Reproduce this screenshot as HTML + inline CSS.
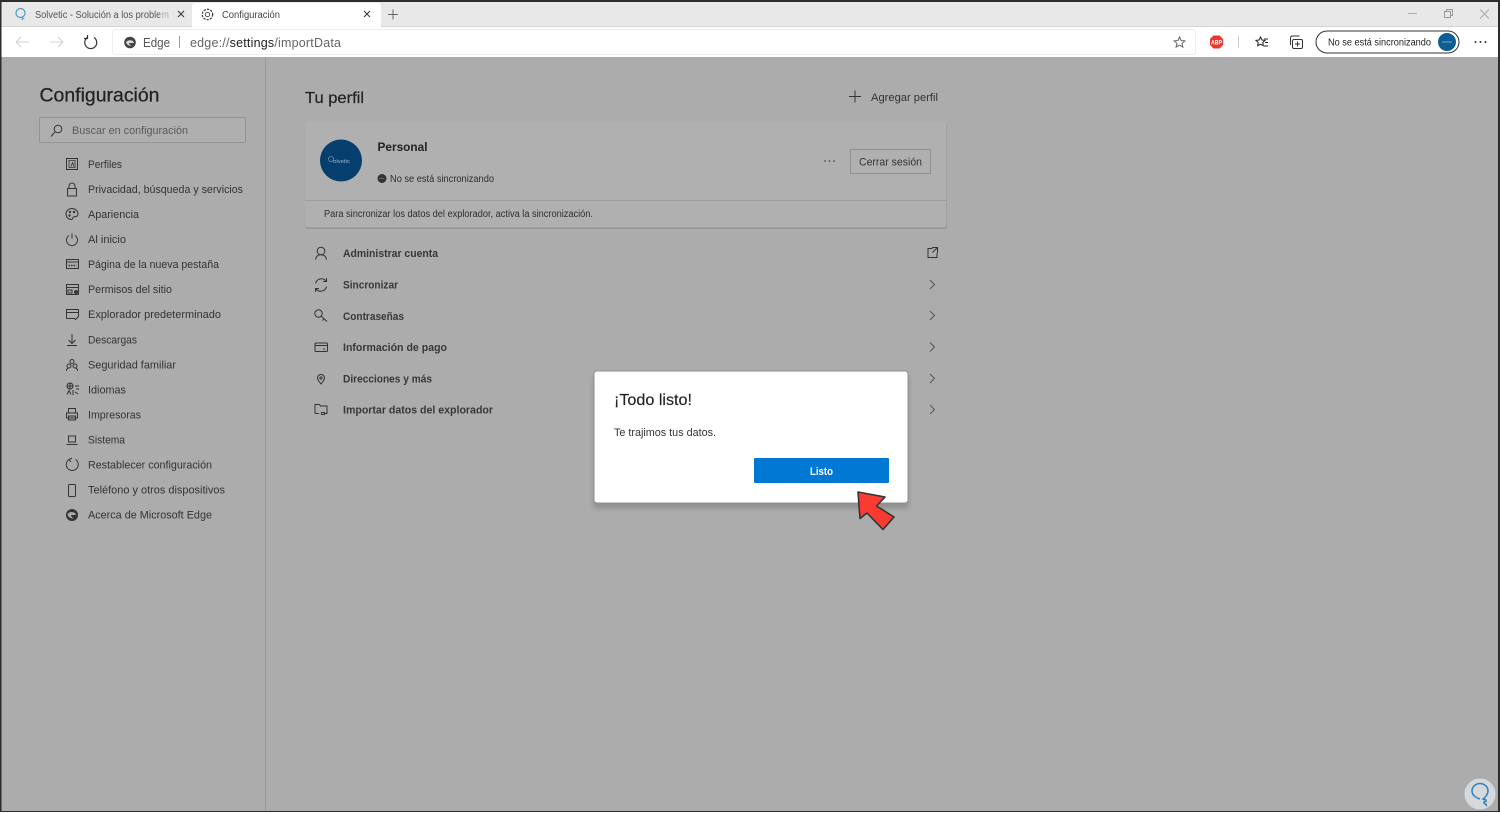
<!DOCTYPE html>
<html lang="es"><head><meta charset="utf-8"><title>Configuración</title>
<style>
html,body{margin:0;padding:0;width:1500px;height:814px;overflow:hidden;background:#fff}
svg{display:block}
text{font-family:"Liberation Sans",sans-serif;font-size:11px;fill:#2b2b2b}
.i{fill:none;stroke:#333;stroke-width:1}
.n text,text.n{fill:#333}
.b{font-weight:700;fill:#383838}
</style></head><body>
<svg width="1500" height="814" viewBox="0 0 1500 814" xmlns="http://www.w3.org/2000/svg">
<defs><filter id="s" x="-10%" y="-10%" width="120%" height="130%"><feGaussianBlur stdDeviation="2.500"/></filter></defs>
<rect width="1500" height="814" fill="#fff"/>
<rect x="1" y="57" width="1497" height="754" fill="#acacac"/>
<!-- tab strip -->
<rect x="1" y="2" width="1497" height="25" fill="#e8e8e8"/>
<rect x="1" y="27" width="1497" height="30" fill="#fff"/>
<rect x="1" y="26" width="1497" height="1" fill="#d4d4d4"/>
<path d="M192 27V6q0-3 3-3h183q3 0 3 3v21z" fill="#fff"/>
<rect x="0" y="0" width="1500" height="2" fill="#2d2d2d"/>
<rect x="0" y="0" width="1.500" height="812" fill="#2d2d2d"/>
<rect x="1498" y="0" width="2" height="812" fill="#2d2d2d"/>
<!-- tab 1 -->
<circle cx="20.500" cy="13" r="4.500" fill="none" stroke="#4a9ac9" stroke-width="1.200"/><path d="M21.500 17.500l2 1-2 1.500" fill="none" stroke="#4a9ac9"/>
<text x="35" y="18" textLength="134" lengthAdjust="spacingAndGlyphs" style="font-size:10px;fill:#555">Solvetic - Solución a los problem</text>
<rect x="160" y="4" width="12" height="20" fill="#e8e8e8" opacity=".6"/>
<path d="M178 11l6 6m0-6l-6 6" class="i"/>
<!-- tab 2 -->
<circle cx="207.500" cy="14.500" r="2.200" fill="none" stroke="#444" stroke-width=".9"/>
<circle cx="207.500" cy="14.500" r="5.200" fill="none" stroke="#444" stroke-width="1.300" stroke-dasharray="2.200 1.200"/>
<text x="222" y="18" textLength="58" lengthAdjust="spacingAndGlyphs" style="font-size:10px;fill:#444">Configuración</text>
<path d="M364 11l6 6m0-6l-6 6" class="i"/>
<path d="M388 14.500h10M393 9.500v10" fill="none" stroke="#666"/>
<!-- window controls -->
<path d="M1408 13.500h9" stroke="#aaa" fill="none"/>
<path d="M1444.500 11.500h6v6h-6zM1446.500 11.500v-2h6v6h-2" fill="none" stroke="#999"/>
<path d="M1480 9.500l9 9m0-9l-9 9" fill="none" stroke="#aaa"/>
<!-- nav -->
<path d="M16 42h13M16 42l5-5M16 42l5 5" fill="none" stroke="#d3d3d3" stroke-width="1.100"/>
<path d="M50 42h13M63 42l-5-5M63 42l-5 5" fill="none" stroke="#d3d3d3" stroke-width="1.100"/>
<path d="M87.500 37.500a6 6 0 1 0 6.500 0M87.500 35v3.500h-3.500" fill="none" stroke="#333" stroke-width="1.200"/>
<rect x="112.500" y="29.500" width="1083" height="25" rx="3" fill="#fff" stroke="#efefef"/>
<circle cx="130" cy="42.500" r="5.800" fill="#444"/><path d="M126 42q3-3 7-1l1 2h-5q0 2 3 3-5 0-6-4z" fill="#ddd"/>
<text x="143" y="47" textLength="27" lengthAdjust="spacingAndGlyphs" style="font-size:12.500px;fill:#555">Edge</text>
<rect x="179" y="36" width="1" height="12" fill="#999"/>
<text x="190" y="47" textLength="151" lengthAdjust="spacing" style="font-size:12.500px;fill:#666">edge://<tspan style="fill:#222">settings</tspan>/importData</text>
<path d="M1179.500 37l1.600 3.500 3.800.4-2.900 2.500.9 3.700-3.400-2-3.400 2 .9-3.700-2.900-2.500 3.800-.4z" fill="none" stroke="#666"/>
<path d="M1213.500 35.500h6l3.500 3.500v6l-3.500 3.500h-6l-3.500-3.500v-6z" fill="#e8372f"/>
<text x="1211" y="44.500" textLength="11" lengthAdjust="spacingAndGlyphs" style="font-size:6px;font-weight:700;fill:#fff">ABP</text>
<rect x="1238" y="36" width="1" height="12" fill="#ccc"/>
<path d="M1260.500 37l1.500 3 3 .4-2.200 2.100.5 3.200-2.800-1.500-2.800 1.500.5-3.200-2.200-2.100 3-.4z" fill="none" stroke="#222"/>
<path d="M1264 39h4M1265 42.500h3M1264 46h4" stroke="#222" fill="none"/>
<rect x="1292.500" y="39.500" width="10" height="9" rx="1.500" fill="none" stroke="#333"/>
<path d="M1290.500 45v-7q0-2 2-2h7M1297.500 41.500v5M1295 44h5" fill="none" stroke="#333"/>
<rect x="1316" y="31" width="143" height="22" rx="11" fill="#fff" stroke="#333" stroke-width="1"/>
<text x="1328" y="45.500" textLength="103" lengthAdjust="spacingAndGlyphs" style="font-size:10px;fill:#222">No se está sincronizando</text>
<circle cx="1447" cy="42" r="9" fill="#0b5e96"/><path d="M1442 42h10" stroke="#9cc" stroke-width=".7"/>
<circle cx="1475.500" cy="42" r="1" fill="#333"/><circle cx="1480.500" cy="42" r="1" fill="#333"/><circle cx="1485.500" cy="42" r="1" fill="#333"/>
<!-- sidebar -->
<rect x="265" y="57" width="1" height="754" fill="#9a9a9a"/>
<text x="39.500" y="101.500" textLength="120" lengthAdjust="spacingAndGlyphs" style="font-size:19px;fill:#222;stroke:#222;stroke-width:.25">Configuración</text>
<rect x="39.500" y="117.500" width="206" height="25" rx="1" fill="#afafaf" stroke="#949494"/>
<circle cx="58" cy="129" r="3.800" fill="none" stroke="#333"/><path d="M55 132l-4 4.500" stroke="#333" fill="none"/>
<text x="72" y="134" textLength="116" lengthAdjust="spacingAndGlyphs" style="fill:#5a5a5a">Buscar en configuración</text>
<g class="n">
<text x="88" y="168" textLength="34" lengthAdjust="spacingAndGlyphs">Perfiles</text>
<text x="88" y="193" textLength="155" lengthAdjust="spacingAndGlyphs">Privacidad, búsqueda y servicios</text>
<text x="88" y="218" textLength="51" lengthAdjust="spacingAndGlyphs">Apariencia</text>
<text x="88" y="243" textLength="38" lengthAdjust="spacingAndGlyphs">Al inicio</text>
<text x="88" y="268" textLength="131" lengthAdjust="spacingAndGlyphs">Página de la nueva pestaña</text>
<text x="88" y="293" textLength="84" lengthAdjust="spacingAndGlyphs">Permisos del sitio</text>
<text x="88" y="318" textLength="133" lengthAdjust="spacingAndGlyphs">Explorador predeterminado</text>
<text x="88" y="343.500" textLength="49" lengthAdjust="spacingAndGlyphs">Descargas</text>
<text x="88" y="368.500" textLength="88" lengthAdjust="spacingAndGlyphs">Seguridad familiar</text>
<text x="88" y="393.500" textLength="38" lengthAdjust="spacingAndGlyphs">Idiomas</text>
<text x="88" y="418.500" textLength="53" lengthAdjust="spacingAndGlyphs">Impresoras</text>
<text x="88" y="443.500" textLength="37" lengthAdjust="spacingAndGlyphs">Sistema</text>
<text x="88" y="468.500" textLength="124" lengthAdjust="spacingAndGlyphs">Restablecer configuración</text>
<text x="88" y="493.500" textLength="137" lengthAdjust="spacingAndGlyphs">Teléfono y otros dispositivos</text>
<text x="88" y="518.500" textLength="124" lengthAdjust="spacingAndGlyphs">Acerca de Microsoft Edge</text>
</g>
<!-- sidebar icons -->
<g class="i">
<path d="M66.500 158.500h11v11h-11z"/><path d="M68.500 158.500v-.5M71 166.500l1.500-4 1.500 4M69 160.500h6v7h-6z" stroke-width=".8"/>
<path d="M67.500 188.500h9v7.500h-9zM69 188.500v-2.500a3 3 0 0 1 6 0v2.500"/>
<path d="M72 208.500c-3.500 0-6 2.500-6 5.500s2.500 5.500 5.500 5.500c1.500 0 1-2 2-2.500 1.500-.5 4.500 0 4.500-3 0-3-2.800-5.500-6-5.500z"/><circle cx="70" cy="212" r=".7"/><circle cx="74" cy="212" r=".7"/><circle cx="69.500" cy="215.500" r=".7"/>
<path d="M69 235.500a5.500 5.500 0 1 0 6 0M72 233.500v5"/>
<rect x="66.500" y="259.500" width="12" height="9"/><path d="M68.500 265.500h8" stroke-width="1.500" stroke-dasharray="1.500 1"/><path d="M66.500 262h12"/>
<rect x="66.500" y="284.500" width="12" height="10"/><path d="M66.500 287.500h12M68 290h4v3h-4z"/><circle cx="76" cy="292" r="1.500" fill="#333"/>
<path d="M66.500 318.500v-9h12v7M66.500 312.500h12M66.500 318.500h8l1 1 3-3"/>
<path d="M72 334v9M68.500 340l3.500 3.500 3.500-3.500M67 345.500h10"/>
<circle cx="72" cy="361.500" r="2"/><circle cx="69" cy="366" r="2"/><circle cx="75" cy="366" r="2"/><path d="M66.500 371c0-2 1-3 2.500-3M77.500 371c0-2-1-3-2.500-3"/>
<circle cx="70" cy="386" r="3"/><path d="M67.500 386h5M70 383v6M75 386h4M76 389h3M67 394.500l2-4 2 4M73 390v5M75 392l3 2"/>
<path d="M68.500 413v-4.500h7v4.500M66.500 413h11v5h-11zM68.500 416h7v4h-7z"/>
<path d="M68.500 436h7v6h-7zM66.500 444.500h11"/>
<path d="M69 459.500a6 6 0 1 0 6.500 0M72 458l-3 1.500 2 2.500"/>
<rect x="68.500" y="484.500" width="7" height="12" rx="1"/>
</g>
<circle cx="72" cy="515" r="6" fill="#333"/><path d="M67.500 514q3-3.500 7.500-1l1 2h-5q0 2 3 3.500-6 0-6.500-4.500z" fill="#aaa"/>
<!-- main -->
<text x="305" y="103" textLength="59" lengthAdjust="spacingAndGlyphs" style="font-size:16px;fill:#222;stroke:#222;stroke-width:.2">Tu perfil</text>
<path d="M849 96.500h12M855 90.500v12" stroke="#333" fill="none"/>
<text x="871" y="101" textLength="67" lengthAdjust="spacingAndGlyphs" style="fill:#333">Agregar perfil</text>
<rect x="305" y="123" width="642" height="106" rx="3" fill="#8f8f8f" opacity=".8"/>
<rect x="305" y="122" width="641.500" height="105.500" rx="3" fill="#b0b0b0"/>
<rect x="305" y="200" width="642" height="1" fill="#9d9d9d"/>
<circle cx="341" cy="160.500" r="21" fill="#063e6e"/>
<circle cx="331" cy="159" r="2.500" fill="none" stroke="#8ab" stroke-width=".6"/>
<text x="333" y="163" textLength="17" lengthAdjust="spacingAndGlyphs" style="font-size:5px;fill:#9bd">olvetic</text>
<text x="377.500" y="151" textLength="50" lengthAdjust="spacingAndGlyphs" style="font-size:12px;font-weight:700;fill:#222">Personal</text>
<circle cx="382" cy="178.500" r="4.500" fill="#333"/><path d="M379.500 178.500h5" stroke="#aaa" stroke-width=".8" stroke-dasharray="1 .6"/>
<text x="390" y="182" textLength="104" lengthAdjust="spacingAndGlyphs" style="font-size:10px;fill:#2e2e2e">No se está sincronizando</text>
<text x="324" y="217" textLength="269" lengthAdjust="spacingAndGlyphs" style="font-size:10px;fill:#2e2e2e">Para sincronizar los datos del explorador, activa la sincronización.</text>
<circle cx="825" cy="161" r=".8" fill="#333"/><circle cx="829.500" cy="161" r=".8" fill="#333"/><circle cx="834" cy="161" r=".8" fill="#333"/>
<rect x="850.500" y="149.500" width="80" height="24" fill="#b0b0b0" stroke="#909090"/>
<text x="859" y="165.500" textLength="63" lengthAdjust="spacingAndGlyphs" style="fill:#333">Cerrar sesión</text>
<text class="b" x="343" y="257" textLength="95" lengthAdjust="spacingAndGlyphs">Administrar cuenta</text>
<text class="b" x="343" y="288.500" textLength="55" lengthAdjust="spacingAndGlyphs">Sincronizar</text>
<text class="b" x="343" y="320" textLength="61" lengthAdjust="spacingAndGlyphs">Contraseñas</text>
<text class="b" x="343" y="351" textLength="104" lengthAdjust="spacingAndGlyphs">Información de pago</text>
<text class="b" x="343" y="382.500" textLength="89" lengthAdjust="spacingAndGlyphs">Direcciones y más</text>
<text class="b" x="343" y="413.500" textLength="150" lengthAdjust="spacingAndGlyphs">Importar datos del explorador</text>
<g class="i">
<circle cx="321" cy="251" r="3.800"/><path d="M315.500 259.500c.5-3.500 2.500-4.800 5.500-4.800s5 1.300 5.500 4.800"/>
<path d="M315.500 283.500a6 6 0 0 1 10.500-2.500M326.500 286.500a6 6 0 0 1-10.500 2.500M326.500 278v3.500h-3.500M315.500 292v-3.500h3.500"/>
<circle cx="318.500" cy="313.500" r="3.700"/><path d="M321 316l6 5.500M324 319l-1.500 1.500"/>
<rect x="315" y="343" width="12.500" height="8.500" rx="1"/><path d="M315 345.500h12.500M323 349h2"/>
<path d="M321 384c-2-2.500-3.500-4-3.500-6a3.500 3.500 0 0 1 7 0c0 2-1.500 3.500-3.500 6z"/><circle cx="321" cy="378" r="1.100"/>
<path d="M315 413.500v-9h4.500l1 1.500h6.500v7.500h-3M315 413.500h4M321 412.500h4M321 412.500l1 1M325 414.500h-4"/>
<path d="M932.500 248.500h-4.500v9h9v-4.500M932 247.500h5.500v5.500M937.500 247.500l-5 5"/>
<path d="M930 280l4.500 4.500-4.500 4.500M930 311l4.500 4.500-4.500 4.500M930 342.500l4.500 4.500-4.500 4.500M930 374l4.500 4.500-4.500 4.500M930 405l4.500 4.500-4.500 4.500" stroke="#555"/>
</g>
<!-- dialog -->
<rect x="593" y="375" width="316" height="134" rx="4" fill="#7d7d7d" opacity=".55" filter="url(#s)"/>
<rect x="594" y="371" width="314" height="132" rx="3" fill="#fff" stroke="#8f8f8f"/>
<text x="614" y="405" textLength="78" lengthAdjust="spacingAndGlyphs" style="font-size:16px;fill:#222;stroke:#222;stroke-width:.15">¡Todo listo!</text>
<text x="614" y="436" textLength="102" lengthAdjust="spacingAndGlyphs" style="fill:#333">Te trajimos tus datos.</text>
<rect x="754" y="458" width="135" height="25" rx="1" fill="#0078d4"/>
<text x="810" y="475" textLength="23" lengthAdjust="spacingAndGlyphs" style="font-weight:700;fill:#fff">Listo</text>
<!-- arrow -->
<path d="M858 492L885 497 876.500 506 894 517 883 529.500 867 513 860 518.500z" fill="#fb3b32" stroke="#333" stroke-width="1.600" stroke-linejoin="round"/>
<!-- watermark -->
<circle cx="1480" cy="794" r="15.500" fill="#d6d9dc"/>
<path d="M1486 806c2-2-3-2-2-4 1-1 3 0 2-2-1-1-3 0-3-1 2-1 5-5 5-8a8 7.500 0 0 0-16 0c0 4 4 7 8 8" fill="none" stroke="#2d7fbe" stroke-width="1.500"/>
<rect x="0" y="811" width="1500" height="1" fill="#2d2d2d"/>
</svg>
</body></html>
